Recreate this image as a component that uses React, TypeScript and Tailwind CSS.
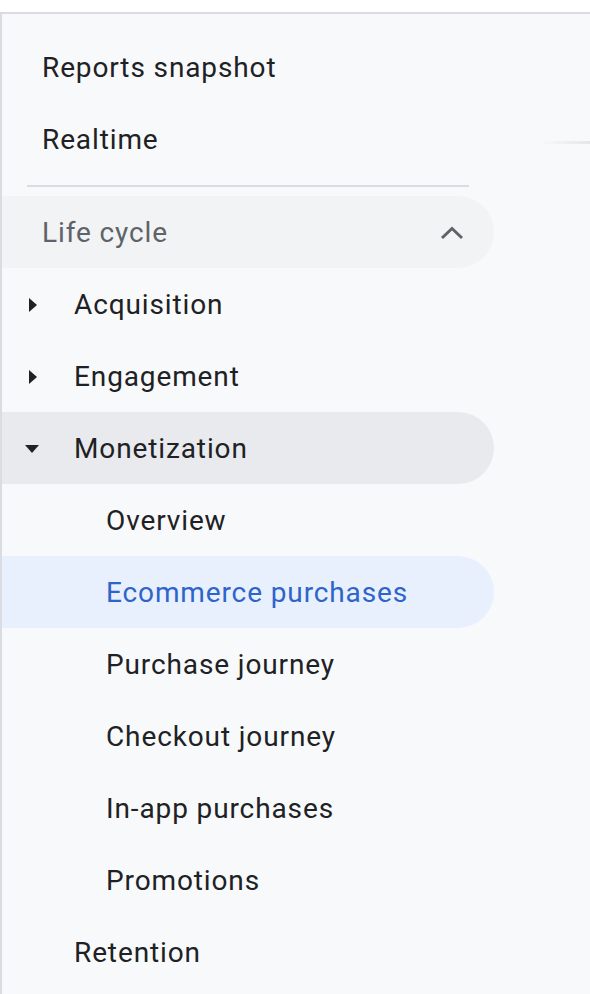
import React from "react";

const font = { fontFamily: "Roboto, 'Noto Sans', Arial, sans-serif" };

function RightArrow() {
  return (
    <svg width="10" height="16" viewBox="0 0 10 16" className="block">
      <path d="M1 1 L9 8 L1 15 Z" fill="#202124" />
    </svg>
  );
}
function DownArrow() {
  return (
    <svg width="16" height="10" viewBox="0 0 16 10" className="block">
      <path d="M1 1 L15 1 L8 9 Z" fill="#202124" />
    </svg>
  );
}
function ChevronUp() {
  return (
    <svg width="24" height="14" viewBox="0 0 24 14" className="block">
      <path d="M2 12 L12 2.5 L22 12" stroke="#5f6368" strokeWidth="3" fill="none" />
    </svg>
  );
}

function Row({
  children,
  indent,
  className = "",
}: {
  children: React.ReactNode;
  indent: string;
  className?: string;
}) {
  return (
    <div className={`h-[72px] flex items-center pt-[2px] ${indent} ${className}`}>{children}</div>
  );
}

export default function App() {
  const sub = ["Purchase journey", "Checkout journey", "In-app purchases", "Promotions"];
  return (
    <div className="w-[590px] h-[994px] overflow-hidden bg-white relative" style={font}>
      <div className="h-[12px] bg-white" />
      <div className="h-[982px] border-t-2 border-l-2 border-[#dadce0] bg-[#f8f9fa] relative text-[28px] text-[#202124] tracking-[0.88px]">
        <div className="absolute left-[538px] top-[127px] w-[52px] h-[3px] bg-gradient-to-r from-transparent to-[#e4e5e7] blur-[0.5px]" />
        <div className="w-[492px] pt-[17px]">
          <Row indent="pl-[40px]">Reports snapshot</Row>
          <Row indent="pl-[40px]">Realtime</Row>
          <div className="h-[21px] flex items-center pl-[25px]">
            <div className="w-[442px] h-[2px] bg-[#dadce0]" />
          </div>
          <Row indent="pl-[40px] pr-[30px] justify-between" className="bg-[#f1f3f4] rounded-r-full text-[#5f6368]">
            <span>Life cycle</span>
            <ChevronUp />
          </Row>
          <Row indent="pl-[26px]">
            <RightArrow />
            <span className="ml-[36px]">Acquisition</span>
          </Row>
          <Row indent="pl-[26px]">
            <RightArrow />
            <span className="ml-[36px]">Engagement</span>
          </Row>
          <Row indent="pl-[22px]" className="bg-[#e8eaed] rounded-r-full">
            <DownArrow />
            <span className="ml-[34px]">Monetization</span>
          </Row>
          <Row indent="pl-[104px]">Overview</Row>
          <Row indent="pl-[104px]" className="bg-[#e8f0fe] rounded-r-full text-[#2e64c9]">
            Ecommerce purchases
          </Row>
          {sub.map((s) => (
            <Row key={s} indent="pl-[104px]">
              {s}
            </Row>
          ))}
          <Row indent="pl-[72px]">Retention</Row>
        </div>
      </div>
    </div>
  );
}
